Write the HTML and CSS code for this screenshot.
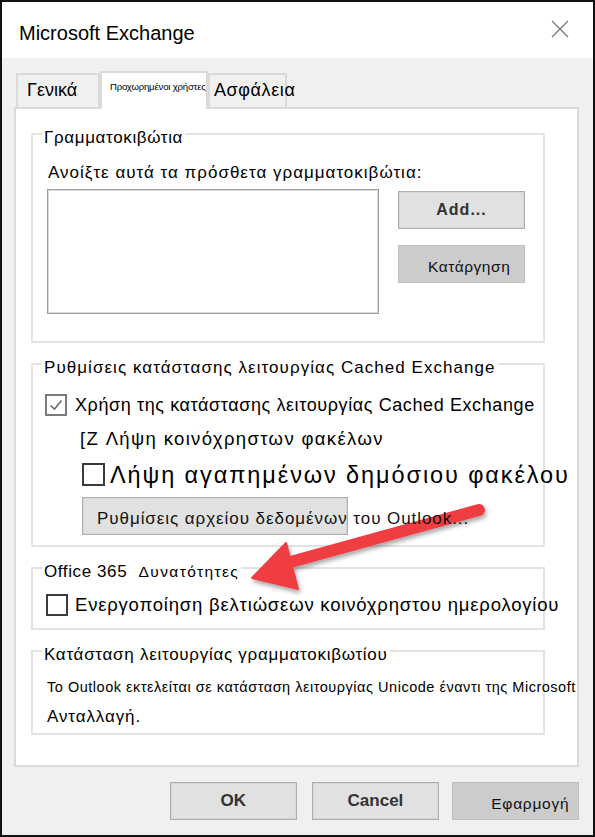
FILE: index.html
```html
<!DOCTYPE html>
<html lang="el">
<head>
<meta charset="utf-8">
<title>Microsoft Exchange</title>
<link rel="stylesheet" href="styles.css">
</head>
<body>
<div class="window">
  <div class="titlebar">
    <span class="title">Microsoft Exchange</span>
    <svg class="close" width="18" height="18" viewBox="0 0 18 18" aria-label="Κλείσιμο">
      <path d="M1 1 L17 17 M17 1 L1 17" stroke="#7a7a7a" stroke-width="1.3" fill="none"/>
    </svg>
  </div>
  <div class="body">
    <div class="tabs">
      <div class="tab tab-general">Γενικά</div>
      <div class="tab tab-active">Προχωρημένοι χρήστες</div>
      <div class="tab tab-security">Ασφάλεια</div>
    </div>
    <div class="panel">
      <fieldset class="group group-mail">
        <legend class="lg-mail">Γραμματοκιβώτια</legend>
        <div class="open-label">Ανοίξτε αυτά τα πρόσθετα γραμματοκιβώτια:</div>
        <div class="mail-row">
          <div class="listbox"></div>
          <div class="mail-buttons">
            <button class="btn btn-add">Add...</button>
            <button class="btn btn-dim btn-remove">Κατάργηση</button>
          </div>
        </div>
      </fieldset>

      <fieldset class="group group-cached">
        <legend class="lg-cached">Ρυθμίσεις κατάστασης λειτουργίας Cached Exchange</legend>
        <div class="check-row row-cached">
          <span class="cb cb-checked">
            <svg width="18" height="18" viewBox="0 0 18 18"><path d="M3.5 9.5 L7.5 13 L14.5 4.5" stroke="#6b6b6b" stroke-width="1.6" fill="none"/></svg>
          </span>
          <span class="row-cached-text">Χρήση της κατάστασης λειτουργίας Cached Exchange</span>
        </div>
        <div class="shared-row">[Z Λήψη κοινόχρηστων φακέλων</div>
        <div class="check-row row-fav">
          <span class="cb"></span>
          <span class="row-fav-text">Λήψη αγαπημένων δημόσιου φακέλου</span>
        </div>
        <button class="btn btn-outlook"><span class="over-text">Ρυθμίσεις αρχείου δεδομένων του Outlook...</span></button>
      </fieldset>

      <fieldset class="group group-o365">
        <legend class="lg-o365">Office 365 <span class="legend-small">Δυνατότητες</span></legend>
        <div class="check-row row-cal">
          <span class="cb"></span>
          <span class="row-cal-text">Ενεργοποίηση βελτιώσεων κοινόχρηστου ημερολογίου</span>
        </div>
      </fieldset>

      <fieldset class="group group-mode">
        <legend class="lg-mode">Κατάσταση λειτουργίας γραμματοκιβωτίου</legend>
        <div class="mode-line1">Το Outlook εκτελείται σε κατάσταση λειτουργίας Unicode έναντι της Microsoft</div>
        <div class="mode-line2">Ανταλλαγή.</div>
      </fieldset>
    </div>
    <div class="footer">
      <button class="btn btn-foot btn-ok">OK</button>
      <button class="btn btn-foot btn-cancel">Cancel</button>
      <button class="btn btn-foot btn-dim btn-apply">Εφαρμογή</button>
    </div>
  </div>

  <svg class="arrow" width="595" height="837" viewBox="0 0 595 837" aria-hidden="true">
    <defs>
      <filter id="shadow" x="-20%" y="-20%" width="140%" height="160%">
        <feDropShadow dx="1.5" dy="3" stdDeviation="2" flood-color="#000" flood-opacity="0.35"/>
      </filter>
    </defs>
    <g filter="url(#shadow)" fill="#ef3d43" stroke="#ef3d43">
      <line x1="479" y1="510" x2="287" y2="563" stroke-width="12" stroke-linecap="round"/>
      <polygon points="252,578 286,543 298,589" stroke-width="2" stroke-linejoin="round"/>
    </g>
  </svg>
</div>
</body>
</html>
```

FILE: styles.css
```css
* {
  box-sizing: border-box;
}

html, body {
  margin: 0;
  padding: 0;
  background: #ffffff;
}

body {
  font-family: "Liberation Sans", Arial, sans-serif;
  color: #000;
}

.window {
  position: relative;
  width: 595px;
  height: 837px;
  border: 2px solid #111;
  display: flex;
  flex-direction: column;
  overflow: hidden;
}

.titlebar {
  height: 56px;
  flex: none;
  background: #fff;
  display: flex;
  align-items: center;
  justify-content: space-between;
  padding: 7px 24px 0 17px;
}

.title {
  font-size: 20px;
  color: #000;
}

.close {
  display: block;
  margin-top: -10px;
}

.body {
  flex: 1;
  background: #f0f0f0;
  padding: 13px 14px 0 12px;
  display: flex;
  flex-direction: column;
}

.tabs {
  height: 36px;
  display: flex;
  align-items: flex-end;
  padding-left: 2px;
}

.tab {
  height: 34px;
  border: 2px solid #dadada;
  border-bottom: none;
  background: #f0f0f0;
  white-space: nowrap;
  font-size: 18px;
  line-height: 30px;
}

.tab-general {
  width: 84px;
  padding-left: 9px;
}

.tab-active {
  position: relative;
  z-index: 1;
  width: 108px;
  height: 38px;
  margin-bottom: -2px;
  background: #fff;
  font-size: 9.6px;
  line-height: 12px;
  padding: 8px 0 0 8px;
  overflow: hidden;
  letter-spacing: -0.2px;
}

.tab-security {
  width: 79px;
  padding-left: 4px;
  letter-spacing: 0.6px;
}

.panel {
  height: 660px;
  flex: none;
  background: #fff;
  border: 2px solid #dadada;
  padding: 12px 0 0 15px;
}

.group {
  width: 514px;
  margin: 8px 0 0 0;
  padding: 0;
  border: 2px solid #e2e2e2;
  min-width: 0;
}

.group-mail {
  margin-top: 0;
}

.group legend {
  margin-left: 9px;
  padding: 8px 2px 0 2px;
  font-size: 17px;
  line-height: 18px;
  white-space: nowrap;
}

.lg-mail {
  letter-spacing: 0.63px;
}

.lg-cached {
  letter-spacing: 1.05px;
}

.lg-o365 {
  letter-spacing: 0.6px;
}

.lg-mode {
  letter-spacing: 0.72px;
}

.legend-small {
  font-size: 15.5px;
  margin-left: 6px;
  letter-spacing: 1.4px;
}

/* Mailboxes group */
.open-label {
  margin: 16px 0 0 15px;
  font-size: 17px;
  line-height: 20px;
  letter-spacing: 1px;
  white-space: nowrap;
}

.mail-row {
  display: flex;
  margin: 6px 0 27px 14px;
}

.listbox {
  width: 332px;
  height: 125px;
  background: #fff;
  border: 1px solid #9c9c9c;
  box-shadow: inset 0 0 0 1px #dcdcdc;
}

.mail-buttons {
  display: flex;
  flex-direction: column;
  gap: 16px;
  margin: 2px 0 0 19px;
}

.btn {
  font-family: "Liberation Sans", Arial, sans-serif;
  height: 38px;
  width: 127px;
  background: #e1e1e1;
  border: 1px solid #adadad;
  box-shadow: inset 0 0 0 1px #d6d6d6;
  color: #1b1b1b;
  padding: 0;
  margin: 0;
  display: flex;
  align-items: center;
  justify-content: center;
  white-space: nowrap;
  overflow: visible;
  font-size: 16px;
}

.btn-dim {
  background: #cccccc;
  border-color: #bfbfbf;
  box-shadow: none;
  font-weight: normal;
}

.btn-add {
  font-weight: bold;
  color: #333;
  letter-spacing: 1px;
}

.btn-remove {
  justify-content: flex-start;
  padding: 6px 0 0 29px;
  font-size: 15.5px;
  letter-spacing: 0.55px;
  color: #111;
}

/* Cached group */
.check-row {
  display: flex;
  align-items: center;
}

.cb {
  flex: none;
  width: 22px;
  height: 22px;
  border: 2px solid #3b3b3b;
  background: #fff;
  display: flex;
  align-items: center;
  justify-content: center;
}

.cb-checked {
  border-color: #7b7b7b;
}

.row-cached {
  margin: 17px 0 0 12px;
}

.row-cached-text {
  margin-left: 8px;
  font-size: 18px;
  line-height: 22px;
  letter-spacing: 0.6px;
  white-space: nowrap;
}

.shared-row {
  margin: 11px 0 0 47px;
  font-size: 18.5px;
  line-height: 24px;
  letter-spacing: 1.35px;
  white-space: nowrap;
}

.row-fav {
  margin: 12px 0 0 49px;
  height: 23px;
}

.row-fav .cb {
  width: 23px;
  height: 23px;
}

.row-fav-text {
  margin-left: 5px;
  font-size: 23.5px;
  line-height: 26px;
  letter-spacing: 1.9px;
  white-space: nowrap;
}

.btn-outlook {
  width: 266px;
  margin: 11px 0 10px 49px;
  justify-content: flex-start;
  padding: 6px 0 0 14px;
  font-size: 17px;
  letter-spacing: 0.94px;
  color: #111;
}

.over-text {
  position: relative;
  z-index: 3;
}

/* Office 365 group */
.row-cal {
  margin: 13px 0 12px 13px;
}

.row-cal-text {
  margin-left: 7px;
  font-size: 18.5px;
  line-height: 22px;
  letter-spacing: 0.8px;
  white-space: nowrap;
}

/* Mailbox mode group */
.mode-line1 {
  margin: 13px 0 0 14px;
  font-size: 14.5px;
  line-height: 20px;
  letter-spacing: 0.52px;
  white-space: nowrap;
}

.mode-line2 {
  margin: 10px 0 6px 14px;
  font-size: 17px;
  line-height: 20px;
  letter-spacing: 0.9px;
}

/* Footer */
.footer {
  display: flex;
  margin-top: 15px;
  padding-left: 156px;
  gap: 15px;
}

.btn-foot {
  font-weight: bold;
  font-size: 17px;
  color: #333;
}

.btn-cancel {
  width: 128px;
}

.btn-apply {
  margin-left: -2px;
  justify-content: flex-start;
  padding: 6px 0 0 38px;
  font-weight: normal;
  font-size: 15.5px;
  letter-spacing: 0.75px;
  color: #111;
}

.arrow {
  position: absolute;
  z-index: 2;
  left: -2px;
  top: -2px;
  pointer-events: none;
}
```
